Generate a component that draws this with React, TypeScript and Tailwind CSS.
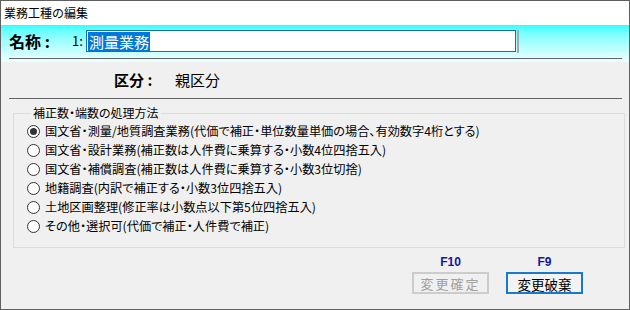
import React, { useState } from 'react';

const options = [
  '国文省・測量/地質調査業務(代価で補正・単位数量単価の場合、有効数字4桁とする)',
  '国文省・設計業務(補正数は人件費に乗算する・小数4位四捨五入)',
  '国文省・補償調査(補正数は人件費に乗算する・小数3位切捨)',
  '地籍調査(内訳で補正する・小数3位四捨五入)',
  '土地区画整理(修正率は小数点以下第5位四捨五入)',
  'その他・選択可(代価で補正・人件費で補正)',
];

function Radio({ checked }: { checked: boolean }) {
  return (
    <span className="flex h-[13px] w-[13px] items-center justify-center rounded-full border border-[#333333] bg-white">
      {checked && <span className="h-[7px] w-[7px] rounded-full bg-[#333333]" />}
    </span>
  );
}

export default function App() {
  const [selected, setSelected] = useState(0);

  return (
    <div className="flex h-[310px] w-[630px] flex-col border border-[#5f5f5f] bg-[#f0f0f0] font-['Noto_Sans_CJK_JP',sans-serif] text-black">
      <div className="flex h-[24px] items-center bg-white pl-[3px] text-[12px]">業務工種の編集</div>

      <div className="h-[37px] bg-gradient-to-b from-[#2effff] to-[#ecffff] pt-[5px]">
        <div className="flex h-[22px] items-center pl-[8px]">
          <span className="w-[63px] text-[16px] font-bold">名称 :</span>
          <span className="w-[14px] text-[13px]">1:</span>
          <div className="flex h-[22px] w-[430px] items-center border border-[#1a6db5] bg-white pl-[1px]">
            <span className="bg-[#0078d7] px-[1px] text-[15px] leading-[19px] text-white">測量業務</span>
          </div>
          <div className="ml-[1px] h-[23px] w-[2px] border-l border-r border-[#a8a8a8] bg-white" />
        </div>
        <div className="ml-[8px] mr-[7px] mt-[6px] h-px bg-[#646464]" />
      </div>

      <div className="flex h-[36px] items-center pl-[113px]">
        <span className="w-[61px] text-[15px] font-bold">区分 :</span>
        <span className="text-[15px]">親区分</span>
      </div>
      <div className="ml-[8px] mr-[7px] h-px bg-[#646464]" />

      <fieldset className="ml-[12px] mr-[4px] mt-[5px] border border-[#dcdcdc] pb-[11px] pl-[13px] pt-[0px]">
        <legend className="ml-[4px] px-[2px] text-[12px] leading-[18px] [font-feature-settings:'palt']">補正数・端数の処理方法</legend>
        {options.map((o, i) => (
          <label
            key={o}
            onClick={() => setSelected(i)}
            className="flex h-[19px] cursor-default items-center gap-[5px] text-[12.2px] [font-feature-settings:'palt']"
          >
            <Radio checked={selected === i} />
            <span>{o}</span>
          </label>
        ))}
      </fieldset>

      <div className="mr-[46px] mt-[7px] flex justify-end gap-[17px]">
        <div className="flex flex-col items-center">
          <span className="font-['Liberation_Sans',sans-serif] text-[12px] font-bold leading-[14px] text-[#1616a0]">F10</span>
          <button
            disabled
            className="mt-[3px] h-[22px] w-[77px] border-2 border-[#cccccc] bg-[#f0f0f0] text-[13px] tracking-[2px] text-[#a0a0a0]"
          >
            変更確定
          </button>
        </div>
        <div className="flex flex-col items-center">
          <span className="font-['Liberation_Sans',sans-serif] text-[12px] font-bold leading-[14px] text-[#1616a0]">F9</span>
          <button className="mt-[3px] h-[22px] w-[77px] border-2 border-[#1979ca] bg-[#f3f3f3] text-[13.5px] text-black">
            変更破棄
          </button>
        </div>
      </div>
    </div>
  );
}
